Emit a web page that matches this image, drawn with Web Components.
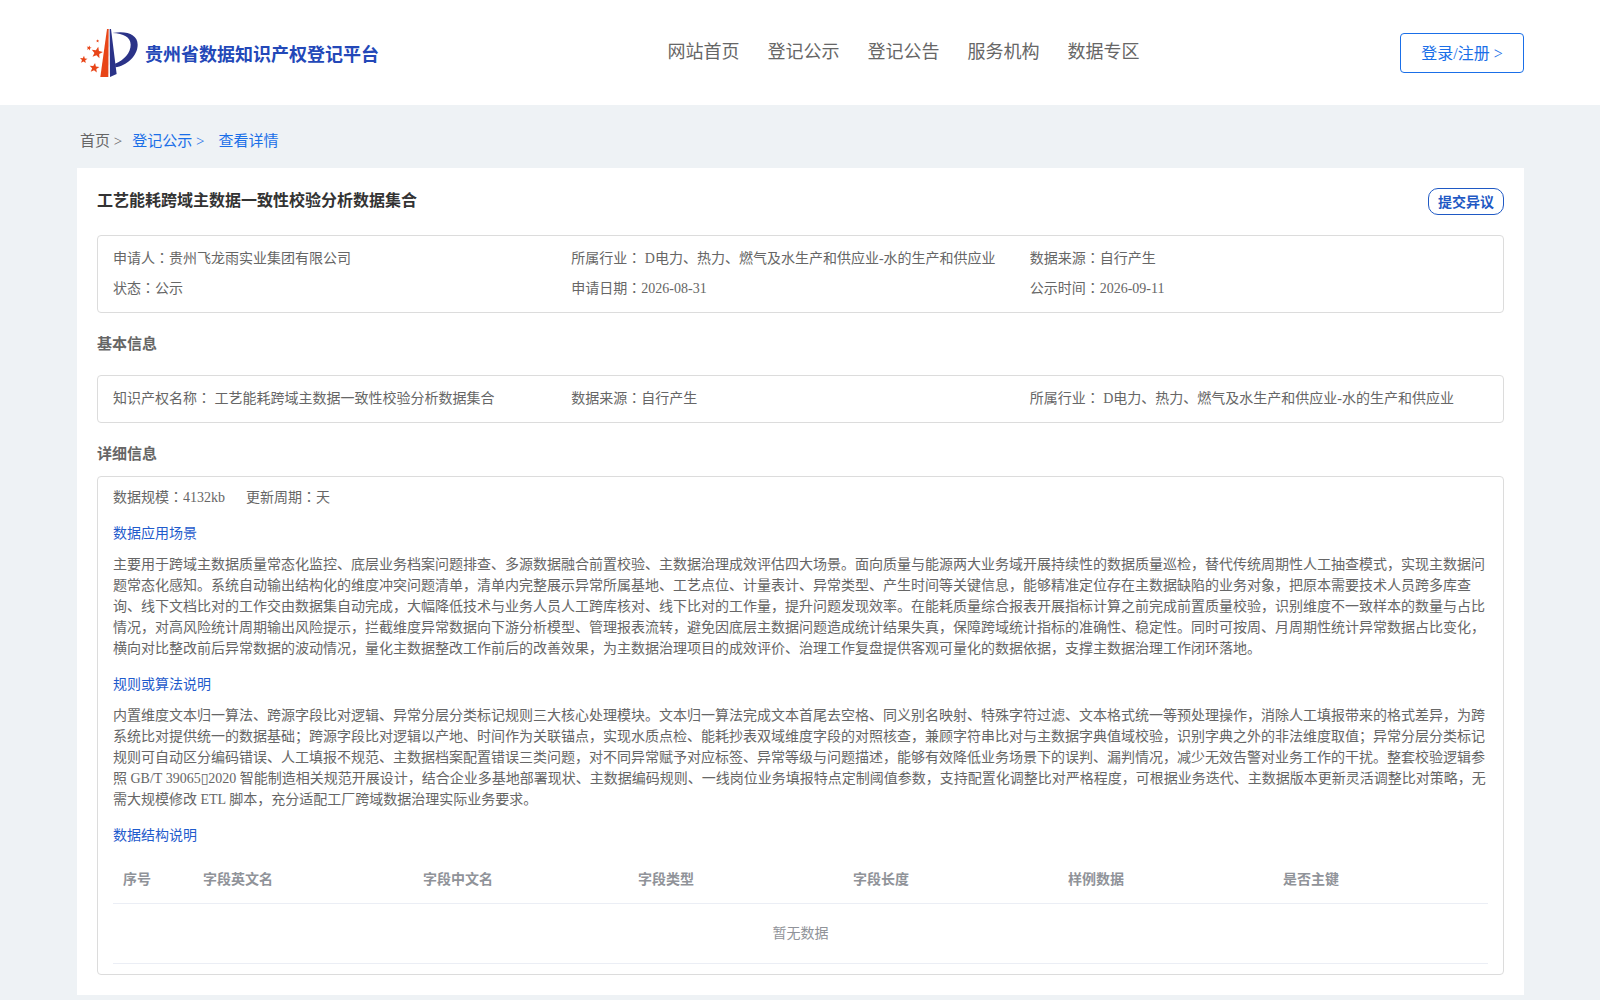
<!DOCTYPE html>
<html lang="zh-CN">
<head>
<meta charset="utf-8">
<meta name="viewport" content="width=device-width, initial-scale=1">
<title>贵州省数据知识产权登记平台</title>
<style>
    body {
        margin: 0;
        background: #eef2f5;
        color: #666;
        font-family: "Liberation Serif", "Noto Sans CJK SC", "DejaVu Sans", serif;
        font-size: 14px;
        line-height: 21px;
    }
</style>
</head>
<body>
<site-header></site-header>
<bread-crumb></bread-crumb>
<detail-card heading="工艺能耗跨域主数据一致性校验分析数据集合">
    <info-box>
        <info-item label="申请人">贵州飞龙雨实业集团有限公司</info-item>
        <info-item label="所属行业">&nbsp;D电力、热力、燃气及水生产和供应业-水的生产和供应业</info-item>
        <info-item label="数据来源">自行产生</info-item>
        <info-item label="状态">公示</info-item>
        <info-item label="申请日期">2026-08-31</info-item>
        <info-item label="公示时间">2026-09-11</info-item>
    </info-box>
    <section-title class="loose">基本信息</section-title>
    <info-box>
        <info-item label="知识产权名称">&nbsp;工艺能耗跨域主数据一致性校验分析数据集合</info-item>
        <info-item label="数据来源">自行产生</info-item>
        <info-item label="所属行业">&nbsp;D电力、热力、燃气及水生产和供应业-水的生产和供应业</info-item>
    </info-box>
    <section-title>详细信息</section-title>
    <detail-panel>
        <info-item slot="meta" label="数据规模">4132kb</info-item>
        <info-item slot="meta" label="更新周期">天</info-item>
        <text-block heading="数据应用场景">主要用于跨域主数据质量常态化监控、底层业务档案问题排查、多源数据融合前置校验、主数据治理成效评估四大场景。面向质量与能源两大业务域开展持续性的数据质量巡检，替代传统周期性人工抽查模式，实现主数据问题常态化感知。系统自动输出结构化的维度冲突问题清单，清单内完整展示异常所属基地、工艺点位、计量表计、异常类型、产生时间等关键信息，能够精准定位存在主数据缺陷的业务对象，把原本需要技术人员跨多库查询、线下文档比对的工作交由数据集自动完成，大幅降低技术与业务人员人工跨库核对、线下比对的工作量，提升问题发现效率。在能耗质量综合报表开展指标计算之前完成前置质量校验，识别维度不一致样本的数量与占比情况，对高风险统计周期输出风险提示，拦截维度异常数据向下游分析模型、管理报表流转，避免因底层主数据问题造成统计结果失真，保障跨域统计指标的准确性、稳定性。同时可按周、月周期性统计异常数据占比变化，横向对比整改前后异常数据的波动情况，量化主数据整改工作前后的改善效果，为主数据治理项目的成效评价、治理工作复盘提供客观可量化的数据依据，支撑主数据治理工作闭环落地。</text-block>
        <text-block heading="规则或算法说明">内置维度文本归一算法、跨源字段比对逻辑、异常分层分类标记规则三大核心处理模块。文本归一算法完成文本首尾去空格、同义别名映射、特殊字符过滤、文本格式统一等预处理操作，消除人工填报带来的格式差异，为跨系统比对提供统一的数据基础；跨源字段比对逻辑以产地、时间作为关联锚点，实现水质点检、能耗抄表双域维度字段的对照核查，兼顾字符串比对与主数据字典值域校验，识别字典之外的非法维度取值；异常分层分类标记规则可自动区分编码错误、人工填报不规范、主数据档案配置错误三类问题，对不同异常赋予对应标签、异常等级与问题描述，能够有效降低业务场景下的误判、漏判情况，减少无效告警对业务工作的干扰。整套校验逻辑参照 GB/T 39065▯2020 智能制造相关规范开展设计，结合企业多基地部署现状、主数据编码规则、一线岗位业务填报特点定制阈值参数，支持配置化调整比对严格程度，可根据业务迭代、主数据版本更新灵活调整比对策略，无需大规模修改 ETL 脚本，充分适配工厂跨域数据治理实际业务要求。</text-block>
        <field-table></field-table>
    </detail-panel>
</detail-card>

<script>
    class SiteHeader extends HTMLElement {
        constructor() {
            super();
            this.attachShadow({ mode: 'open' });
            this.shadowRoot.innerHTML = `
                <style>
                    :host {
                        display: block;
                        background: #fff;
                    }
                    header {
                        display: flex;
                        align-items: center;
                        justify-content: space-between;
                        height: 105px;
                        padding: 0 76px 0 77px;
                    }
                    a {
                        color: inherit;
                        text-decoration: none;
                    }
                    .logo {
                        display: flex;
                        align-items: center;
                        gap: 7px;
                        min-width: 327px;
                        padding-left: 3px;
                        color: #2348b8;
                        font-size: 18px;
                        font-weight: bold;
                    }
                    .logo span {
                        padding-top: 6px;
                    }
                    svg {
                        width: 58px;
                        height: 50px;
                    }
                    nav {
                        display: flex;
                        gap: 28px;
                        font-size: 18px;
                    }
                    .login {
                        min-width: 124px;
                        height: 40px;
                        padding: 0 20px 2px;
                        border: 1px solid #1a6fe8;
                        border-radius: 4px;
                        background: #fff;
                        color: #1a6fe8;
                        font-family: inherit;
                        font-size: 16px;
                        cursor: pointer;
                    }
                </style>
                <header>
                    <a class="logo" href="#">
                        <svg viewBox="30 24 174 150" aria-hidden="true">
                            <defs>
                                <path id="star" d="M0-10 2.6-3.4 9.5-3.1 4.1 1.3 5.9 8.1 0 4.3-5.9 8.1-4.1 1.3-9.5-3.1-2.6-3.4Z"/>
                            </defs>
                            <g fill="#e84518">
                                <path d="M111 27h5l-1 144H91Z"/>
                                <use href="#star" transform="translate(81 98) rotate(12) scale(1.8)"/>
                                <use href="#star" transform="translate(73 144) rotate(8) scale(1.55)"/>
                                <use href="#star" transform="translate(41 119) rotate(5) scale(1.2)"/>
                                <use href="#star" transform="translate(57 84) rotate(15) scale(.8)"/>
                                <use href="#star" transform="translate(83 63) rotate(10) scale(.5)"/>
                            </g>
                            <g fill="#2b3388">
                                <path d="M119 27h4l17 135-20 9Z"/>
                                <path d="M127 39C170 31 203 43 203 74c0 34-34 63-67 68l-1-11c27-11 47-32 47-57 0-22-21-34-55-35Z"/>
                            </g>
                        </svg>
                        <span>贵州省数据知识产权登记平台</span>
                    </a>
                    <nav>
                        <a href="#">网站首页</a>
                        <a href="#">登记公示</a>
                        <a href="#">登记公告</a>
                        <a href="#">服务机构</a>
                        <a href="#">数据专区</a>
                    </nav>
                    <button class="login" type="button">登录/注册 &gt;</button>
                </header>
            `;
        }
    }

    class BreadCrumb extends HTMLElement {
        constructor() {
            super();
            this.attachShadow({ mode: 'open' });
            this.shadowRoot.innerHTML = `
                <style>
                    :host {
                        display: block;
                        padding: 25px 80px 16px;
                        font-size: 15px;
                        line-height: 22px;
                    }
                    nav {
                        display: flex;
                    }
                    a {
                        margin-right: 10px;
                        color: #1a6fe8;
                        text-decoration: none;
                    }
                    .home {
                        color: #666;
                    }
                    .parent {
                        margin-right: 14px;
                    }
                </style>
                <nav>
                    <a class="home" href="#">首页 &gt;</a>
                    <a class="parent" href="#">登记公示 &gt;</a>
                    <a href="#" aria-current="page">查看详情</a>
                </nav>
            `;
        }
    }

    // Белая карточка с заголовком и кнопкой
    class DetailCard extends HTMLElement {
        constructor() {
            super();
            this.attachShadow({ mode: 'open' });
            this.shadowRoot.innerHTML = `
                <style>
                    :host {
                        display: block;
                        margin: 0 76px 0 77px;
                        padding: 20px;
                        background: #fff;
                    }
                    .top {
                        display: flex;
                        align-items: flex-start;
                        justify-content: space-between;
                        margin-bottom: 20px;
                    }
                    h1 {
                        margin: 0;
                        color: #333;
                        font-size: 16px;
                        line-height: 26px;
                    }
                    button {
                        height: 27px;
                        padding: 0 9px 2px;
                        border: 1px solid #1f59c4;
                        border-radius: 10px;
                        background: #fff;
                        color: #1f59c4;
                        font-family: inherit;
                        font-size: 14px;
                        font-weight: bold;
                        cursor: pointer;
                    }
                </style>
                <div class="top">
                    <h1></h1>
                    <button type="button">提交异议</button>
                </div>
                <slot></slot>
            `;
        }

        connectedCallback() {
            this.shadowRoot.querySelector('h1').textContent = this.getAttribute('heading');
        }
    }

    class InfoBox extends HTMLElement {
        constructor() {
            super();
            this.attachShadow({ mode: 'open' });
            this.shadowRoot.innerHTML = `
                <style>
                    :host {
                        display: grid;
                        grid-template-columns: repeat(3, 1fr);
                        padding: 8px 15px;
                        border: 1px solid #dcdcdc;
                        border-radius: 4px;
                        line-height: 30px;
                    }
                </style>
                <slot></slot>
            `;
        }
    }

    // Двоеточие по центру знака, как в японском начертании
    class InfoItem extends HTMLElement {
        constructor() {
            super();
            this.attachShadow({ mode: 'open' });
            this.shadowRoot.innerHTML = `
                <style>
                    :host {
                        display: block;
                    }
                    .colon {
                        font-family: "Noto Sans CJK JP", sans-serif;
                        line-height: 1;
                    }
                </style>
                <span class="label"></span><span class="colon" lang="ja">：</span><slot></slot>
            `;
        }

        connectedCallback() {
            this.shadowRoot.querySelector('.label').textContent = this.getAttribute('label');
        }
    }

    class SectionTitle extends HTMLElement {
        constructor() {
            super();
            this.attachShadow({ mode: 'open' });
            this.shadowRoot.innerHTML = `
                <style>
                    :host {
                        display: block;
                        padding: 20px 0 10px;
                    }
                    :host(.loose) {
                        padding-bottom: 19px;
                    }
                    h2 {
                        margin: 0;
                        font-size: 15px;
                        line-height: 23px;
                    }
                </style>
                <h2><slot></slot></h2>
            `;
        }
    }

    class DetailPanel extends HTMLElement {
        constructor() {
            super();
            this.attachShadow({ mode: 'open' });
            this.shadowRoot.innerHTML = `
                <style>
                    :host {
                        display: block;
                        padding: 10px 15px;
                        border: 1px solid #dcdcdc;
                        border-radius: 4px;
                    }
                    .meta {
                        display: flex;
                        gap: 21px;
                    }
                </style>
                <div class="meta"><slot name="meta"></slot></div>
                <slot></slot>
            `;
        }
    }

    class TextBlock extends HTMLElement {
        constructor() {
            super();
            this.attachShadow({ mode: 'open' });
            this.shadowRoot.innerHTML = `
                <style>
                    :host {
                        display: block;
                    }
                    h3 {
                        margin: 15px 0 10px;
                        color: #1f5bcc;
                        font-size: 14px;
                        font-weight: normal;
                    }
                    p {
                        margin: 0;
                    }
                </style>
                <h3></h3>
                <p><slot></slot></p>
            `;
        }

        connectedCallback() {
            this.shadowRoot.querySelector('h3').textContent = this.getAttribute('heading');
        }
    }

    class FieldTable extends HTMLElement {
        constructor() {
            super();
            this.attachShadow({ mode: 'open' });
            this.shadowRoot.innerHTML = `
                <style>
                    :host {
                        display: block;
                        color: #909399;
                    }
                    h3 {
                        margin: 15px 0 10px;
                        color: #1f5bcc;
                        font-size: 14px;
                        font-weight: normal;
                    }
                    table {
                        width: 100%;
                        border-collapse: collapse;
                        table-layout: fixed;
                    }
                    .index {
                        width: 80px;
                    }
                    .english {
                        width: 220px;
                    }
                    th {
                        height: 47px;
                        padding: 0 10px;
                        border-bottom: 1px solid #ebeef5;
                        text-align: left;
                    }
                    td {
                        height: 59px;
                        padding: 0;
                        border-bottom: 1px solid #ebeef5;
                        text-align: center;
                    }
                </style>
                <h3 id="caption">数据结构说明</h3>
                <table aria-labelledby="caption">
                    <colgroup>
                        <col class="index">
                        <col class="english">
                        <col span="5">
                    </colgroup>
                    <thead>
                        <tr>
                            <th>序号</th>
                            <th>字段英文名</th>
                            <th>字段中文名</th>
                            <th>字段类型</th>
                            <th>字段长度</th>
                            <th>样例数据</th>
                            <th>是否主键</th>
                        </tr>
                    </thead>
                    <tbody>
                        <tr><td colspan="7">暂无数据</td></tr>
                    </tbody>
                </table>
            `;
        }
    }

    customElements.define('site-header', SiteHeader);
    customElements.define('bread-crumb', BreadCrumb);
    customElements.define('detail-card', DetailCard);
    customElements.define('info-box', InfoBox);
    customElements.define('info-item', InfoItem);
    customElements.define('section-title', SectionTitle);
    customElements.define('detail-panel', DetailPanel);
    customElements.define('text-block', TextBlock);
    customElements.define('field-table', FieldTable);
</script>
</body>
</html>
